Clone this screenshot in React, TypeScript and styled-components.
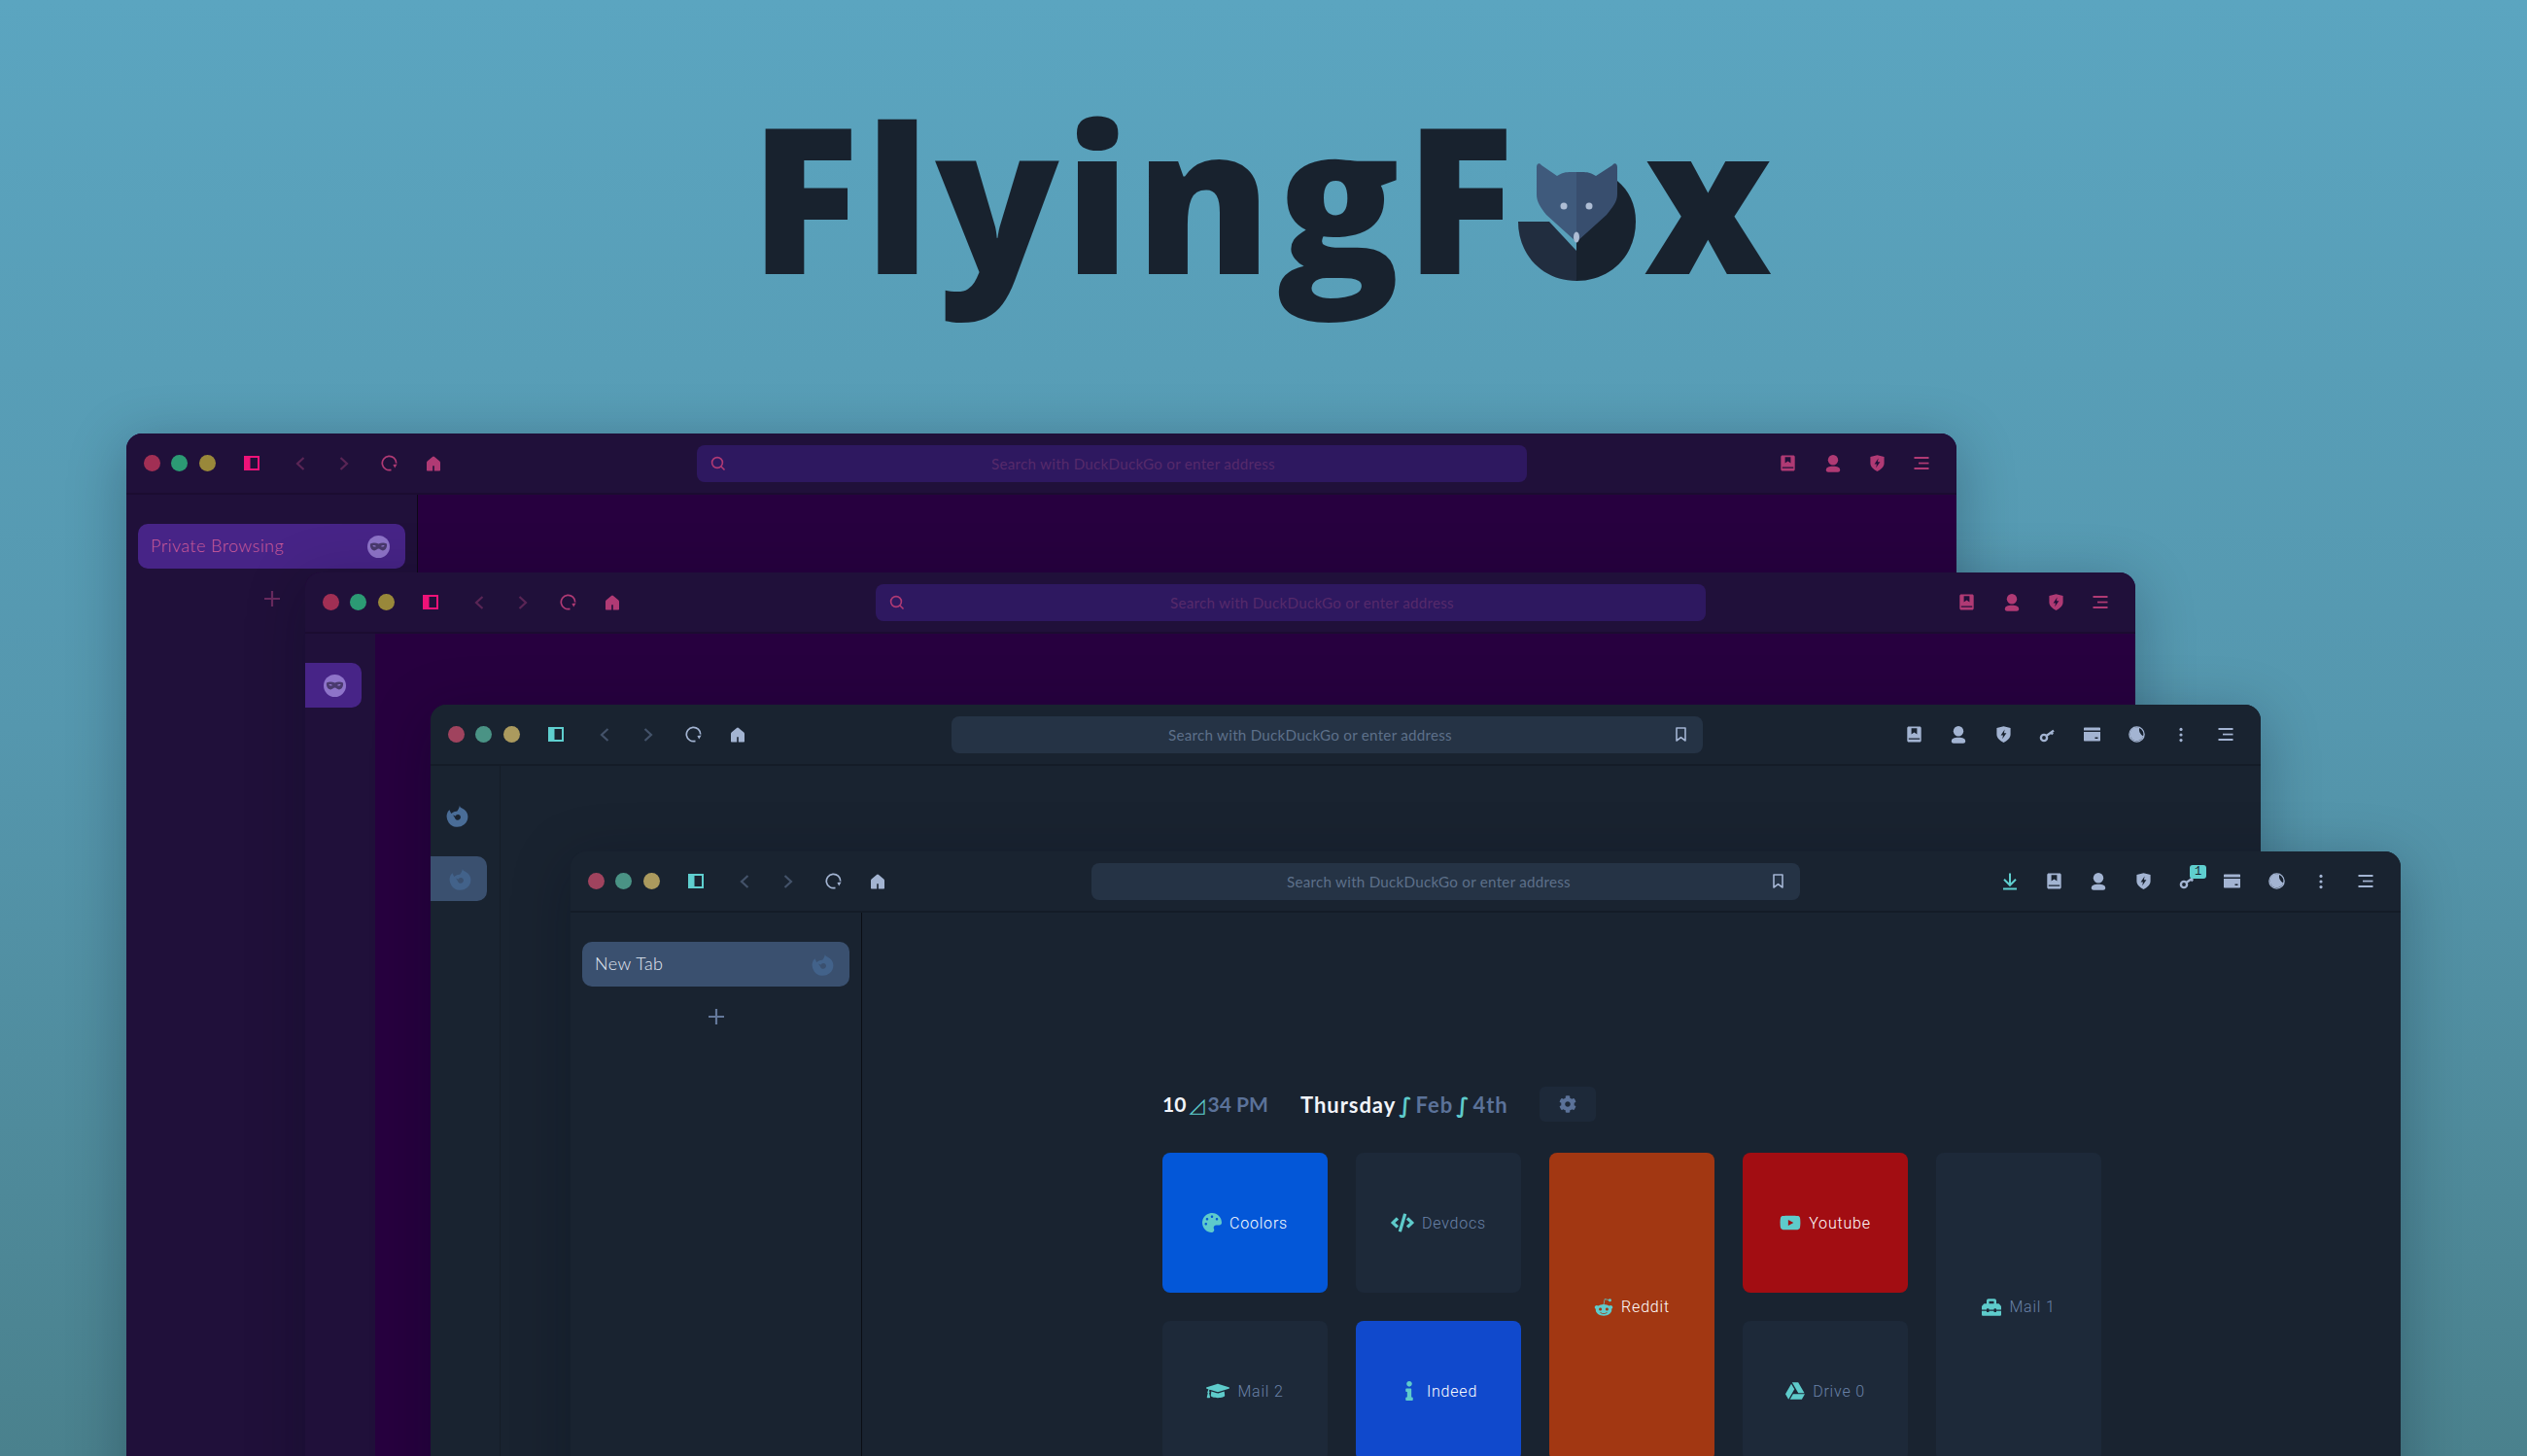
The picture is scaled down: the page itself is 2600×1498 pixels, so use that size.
import React, { useContext } from "react";
import styled, { createGlobalStyle, ThemeContext, ThemeProvider } from "styled-components";
import { FaPalette, FaCode, FaRedditAlien, FaYoutube, FaGoogleDrive, FaToolbox, FaGraduationCap, FaInfo, FaCog } from "react-icons/fa";

const purple = {
  bar: "#20103a", line: "#1b0c31", content: "#27003f", url: "#2e1860", urlText: "#562a6b",
  icon: "#b03a74", off: "#5a2555", toggle: "#ee1278", dots: ["#a12f54", "#2c9a74", "#99883a"],
  tab: "#472487", tabText: "#cc5c9a", plus: "#6a2a5f", side: "#0d0818",
};
const slate = {
  bar: "#192330", line: "#141c27", content: "#192330", url: "#253345", urlText: "#5d708a",
  icon: "#a3b4d2", off: "#435269", toggle: "#5fcfcf", dots: ["#a0435e", "#4a9385", "#ab9a5e"],
  tab: "#3a506f", tabText: "#e2e9f3", plus: "#64789a", side: "#141c27",
};

const Global = createGlobalStyle`
  html, body { margin: 0; padding: 0; }
  body { font-family: "Lato", "Liberation Sans", sans-serif; background: #4f8a9c; }
`;

const Stage = styled.div`
  position: relative;
  width: 2600px;
  height: 1498px;
  overflow: hidden;
  background: linear-gradient(180deg, #5ba5c0 0%, #5597ae 50%, #4a818d 100%);
`;

const Logo = styled.h1`
  display: flex;
  justify-content: center;
  align-items: baseline;
  margin: 0;
  padding-top: 97px;
  font-family: "Open Sans", "Noto Sans", sans-serif;
  font-weight: 800;
  font-size: 209px;
  line-height: 1;
  letter-spacing: 5.3px;
  color: #18222e;
`;

const FoxMark = styled.svg`
  width: 121px;
  height: 121px;
  flex: none;
  margin: 0 9px 0 -2px;
  transform: translateY(7px);
`;

const Win = styled.section<{ $x: number; $y: number; $w: number }>`
  position: absolute;
  left: ${p => p.$x}px;
  top: ${p => p.$y}px;
  width: ${p => p.$w}px;
  height: 1300px;
  display: flex;
  flex-direction: column;
  overflow: hidden;
  border-radius: 16px 16px 0 0;
  background: ${p => p.theme.content};
  box-shadow: 0 12px 60px rgba(8, 10, 24, 0.28);
`;

const Toolbar = styled.header`
  flex: none;
  height: 63px;
  box-sizing: border-box;
  display: flex;
  align-items: center;
  padding: 0 13px 0 17.5px;
  background: ${p => p.theme.bar};
  border-bottom: 2px solid ${p => p.theme.line};
`;

const Dots = styled.div`
  display: flex;
  gap: 11.5px;
  margin-right: 15px;
`;

const Dot = styled.span<{ $c: string }>`
  width: 17px;
  height: 17px;
  border-radius: 50%;
  background: ${p => p.$c};
`;

const Slot = styled.span`
  position: relative;
  flex: none;
  width: 45.8px;
  display: flex;
  align-items: center;
  justify-content: center;
  color: ${p => p.theme.icon};
`;

const ToggleSlot = styled(Slot)`
  margin-right: 3.5px;
  color: ${p => p.theme.toggle};
`;

const OffSlot = styled(Slot)`
  color: ${p => p.theme.off};
`;

const ActiveSlot = styled(Slot)`
  color: #5fcfcf;
`;

const UrlBar = styled.div<{ $ml: number; $w: number }>`
  flex: none;
  margin-left: ${p => p.$ml}px;
  width: ${p => p.$w}px;
  height: 38px;
  display: flex;
  align-items: center;
  border-radius: 8px;
  background: ${p => p.theme.url};
`;

const UrlSearch = styled.span`
  flex: none;
  width: 44px;
  display: flex;
  justify-content: center;
  color: ${p => p.theme.icon};
`;

const UrlText = styled.span`
  flex: 1;
  text-align: center;
  font-size: 15.2px;
  letter-spacing: 0.25px;
  color: ${p => p.theme.urlText};
`;

const UrlMark = styled.span`
  flex: none;
  box-sizing: border-box;
  width: 35px;
  padding-right: 16px;
  display: flex;
  justify-content: flex-end;
  color: ${p => p.theme.icon};
`;

const RightTools = styled.div`
  margin-left: auto;
  display: flex;
`;

const Badge = styled.span`
  position: absolute;
  left: 25px;
  top: -7px;
  width: 17px;
  height: 14px;
  border-radius: 3px;
  background: #5fcfcf;
  color: #18222e;
  font: 12px/14px "Liberation Mono", monospace;
  text-align: center;
`;

const Body = styled.div`
  flex: 1;
  display: flex;
  min-height: 0;
`;

const Side = styled.aside<{ $w: number; $line?: string; $top: number }>`
  flex: none;
  box-sizing: border-box;
  width: ${p => p.$w}px;
  padding-top: ${p => p.$top}px;
  display: flex;
  flex-direction: column;
  background: ${p => p.theme.bar};
  border-right: 1.5px solid ${p => p.$line || p.theme.side};
`;

const TabLabel = styled.span`
  padding-bottom: 2px;
`;

const Tab = styled.div`
  height: 46px;
  margin: 0 12px;
  padding: 0 16px 0 13px;
  display: flex;
  align-items: center;
  justify-content: space-between;
  border-radius: 10px;
  background: ${p => p.theme.tab};
  color: ${p => p.theme.tabText};
  font-size: 18px;
  font-weight: 300;
  letter-spacing: 0.45px;
`;

const PinnedTab = styled.div`
  width: 58px;
  height: 46px;
  padding-left: 2px;
  box-sizing: border-box;
  display: flex;
  align-items: center;
  justify-content: center;
  border-radius: 0 10px 10px 0;
  background: ${p => p.theme.tab};
`;

const PinnedIcon = styled.div`
  height: 23px;
  margin: 0 0 30px 16px;
  display: flex;
`;

const Plus = styled.div`
  align-self: center;
  margin-top: 22px;
  color: ${p => p.theme.plus};
  display: flex;
`;

const Page = styled.main`
  flex: 1;
  padding: 179px 0 0 309px;
  display: flex;
  flex-direction: column;
`;

const ClockRow = styled.div`
  display: flex;
  align-items: center;
  height: 36px;
  font-size: 22px;
  font-weight: 700;
  color: #5b7299;
`;

const Strong = styled.span`
  color: #f1f4fa;
`;

const Glyph = styled.span`
  color: #5ecbcb;
  font-family: "DejaVu Sans", sans-serif;
  font-weight: 700;
  margin: 0 3px;
`;

const ClockPart = styled.span`
  flex: none;
  width: 142px;
  white-space: pre;
  font-size: 21px;
`;

const DatePart = styled.span`
  flex: none;
  width: 246px;
  white-space: pre;
  letter-spacing: 0.95px;
`;

const Gear = styled.button`
  width: 58px;
  height: 36px;
  border: 0;
  border-radius: 6px;
  background: #1d2939;
  color: #5b7299;
  display: flex;
  align-items: center;
  justify-content: center;
  padding: 0;
`;

const Tiles = styled.div`
  margin-top: 32px;
  display: grid;
  grid-template-columns: repeat(5, 170px);
  grid-template-rows: repeat(2, 144px);
  gap: 29px;
`;

const Tile = styled.a<{ $bg?: string; $tall?: boolean }>`
  grid-row: ${p => (p.$tall ? "span 2" : "auto")};
  display: flex;
  align-items: center;
  justify-content: center;
  gap: 8px;
  border-radius: 8px;
  background: ${p => p.$bg || "#1d2939"};
  color: ${p => (p.$bg ? "#ffffff" : "#6a82a8")};
  font-family: "Roboto", sans-serif;
  font-size: 16px;
  font-weight: 300;
  letter-spacing: 0.8px;
  svg { color: #5ecbcb; flex: none; }
`;

const Svg = ({ s = 16, w, children }: any) => (
  <svg width={w || s} height={s} viewBox={`0 0 ${w || s} ${s}`} fill="currentColor">{children}</svg>
);

const Toggle = () => (
  <svg width="16" height="15" viewBox="0 0 16 15">
    <rect x="1" y="1" width="14" height="13" fill="none" stroke="currentColor" strokeWidth="2" />
    <rect x="1" y="1" width="5.5" height="13" fill="currentColor" />
  </svg>
);
const Chevron = ({ right }: { right?: boolean }) => (
  <svg width="10" height="16" viewBox="0 0 10 16" fill="none" stroke="currentColor" strokeWidth="2.2">
    <path d={right ? "M1.5 2 L8 8 L1.5 14" : "M8.5 2 L2 8 L8.5 14"} />
  </svg>
);
const Reload = () => (
  <svg width="17" height="17" viewBox="0 0 17 17">
    <path d="M10.5 15.4 A7.2 7.2 0 1 1 15.7 8.5" fill="none" stroke="currentColor" strokeWidth="1.7" />
    <path d="M12.4 10 L16.6 9.6 L14.2 13.6 Z" fill="currentColor" />
  </svg>
);
const Home = () => (
  <Svg s={16}>
    <path fillRule="evenodd" d="M8 .6 C8.4 .6 8.8 .9 9 1 L14.4 5.6 C14.8 6 15 6.4 15 7 V14.5 C15 15.2 14.6 15.6 14 15.6 H2 C1.4 15.6 1 15.2 1 14.5 V7 C1 6.4 1.2 6 1.6 5.6 L7 1 C7.2 .9 7.6 .6 8 .6 Z M7.2 10.2 V15.6 H8.8 V10.2 Z" />
  </Svg>
);
const Library = () => (
  <Svg s={17} w={15}>
    <path fillRule="evenodd" d="M2 .5 H13 C14 .5 14.7 1.2 14.7 2 V15 C14.7 15.9 14 16.5 13 16.5 H2 C1 16.5 .3 15.9 .3 15 V2 C.3 1.2 1 .5 2 .5 Z M4.6 2.2 V8.6 L7.5 6.6 L10.4 8.6 V2.2 Z M1.8 12.4 V13.8 H13.2 V12.4 Z" />
  </Svg>
);
const Person = () => (
  <Svg s={18} w={16}>
    <circle cx="8" cy="5.2" r="5.2" />
    <path d="M.8 15.6 C.8 13 3.4 11.8 8 11.8 C12.6 11.8 15.2 13 15.2 15.6 C15.2 17 14.2 17.8 13 17.8 H3 C1.8 17.8 .8 17 .8 15.6 Z" />
  </Svg>
);
const Shield = () => (
  <Svg s={17} w={15}>
    <path fillRule="evenodd" d="M7.5 .2 L14.6 2 V8.5 C14.6 12.4 11 15.4 7.5 16.9 C4 15.4 .4 12.4 .4 8.5 V2 Z M8.6 3.6 L4.6 9.4 H7 L6.2 13.2 L10.4 7.2 H7.9 Z" />
  </Svg>
);
const Menu = () => (
  <Svg s={15} w={16}>
    <rect x="0.5" y="1" width="15" height="2" />
    <rect x="5" y="6.7" width="10.5" height="1.7" />
    <rect x="0.5" y="12" width="15" height="2" />
  </Svg>
);
const Key = () => (
  <svg width="20" height="20" viewBox="0 0 20 20" fill="none" stroke="currentColor">
    <circle cx="6" cy="13" r="3.1" strokeWidth="2.4" />
    <path d="M8.6 11 L16 5.6 M13.4 7.4 L15 9.4" strokeWidth="2.4" />
  </svg>
);
const Card = () => (
  <Svg s={15} w={17}>
    <path fillRule="evenodd" d="M1 .5 H16 C16.6 .5 17 .9 17 1.5 V3.6 H0 V1.5 C0 .9 .4 .5 1 .5 Z M0 5 H17 V13.5 C17 14.1 16.6 14.5 16 14.5 H1 C.4 14.5 0 14.1 0 13.5 Z M11.5 10.5 V12 H14.5 V10.5 Z" />
  </Svg>
);
const Moon = () => (
  <svg width="17" height="17" viewBox="0 0 17 17">
    <circle cx="8.5" cy="8.5" r="7.6" fill="none" stroke="currentColor" strokeWidth="1.4" />
    <path d="M11.2 1.8 A7 7 0 1 0 15.2 10.4 A7.4 7.4 0 0 1 11.2 1.8 Z" fill="currentColor" />
  </svg>
);
const VDots = () => (
  <Svg s={16} w={6}>
    <circle cx="3" cy="2.4" r="1.6" />
    <circle cx="3" cy="8" r="1.6" />
    <circle cx="3" cy="13.6" r="1.6" />
  </Svg>
);
const Download = () => (
  <svg width="16" height="18" viewBox="0 0 16 18" fill="none" stroke="currentColor" strokeWidth="2">
    <path d="M8 .5 V12.5 M2 6.8 L8 12.8 L14 6.8 M1 16.6 H15" />
  </svg>
);
const BookmarkLine = () => (
  <svg width="13" height="15" viewBox="0 0 13 15" fill="none" stroke="currentColor" strokeWidth="1.6">
    <path d="M2 1 H11 V14 L6.5 10.6 L2 14 Z" strokeLinejoin="round" />
  </svg>
);
const Search = () => (
  <svg width="16" height="16" viewBox="0 0 16 16" fill="none" stroke="currentColor" strokeWidth="1.6">
    <circle cx="7" cy="7" r="5.4" />
    <path d="M11 11 L14.5 14.5" />
  </svg>
);
const PlusIcon = () => (
  <svg width="18" height="18" viewBox="0 0 18 18" fill="none" stroke="currentColor" strokeWidth="2.2">
    <path d="M9 1 V17 M1 9 H17" />
  </svg>
);
const Mask = () => (
  <svg width="23" height="23" viewBox="0 0 23 23">
    <circle cx="11.5" cy="11.5" r="11.5" fill="#8e74c9" />
    <path fillRule="evenodd" fill="#4a3a6e" d="M3 8.5 C6 7 9 7.6 11.5 8.6 C14 7.6 17 7 20 8.5 C20.6 12 18.6 15.4 15.8 15.4 C14 15.4 13 13.6 11.5 13.6 C10 13.6 9 15.4 7.2 15.4 C4.4 15.4 2.4 12 3 8.5 Z M5.4 10.4 C6.2 11.8 8 11.8 9 11 C8 10 6.4 9.8 5.4 10.4 Z M17.6 10.4 C16.8 11.8 15 11.8 14 11 C15 10 16.6 9.8 17.6 10.4 Z" />
  </svg>
);
const Firefox = ({ c }: { c: string }) => (
  <svg width="23" height="23" viewBox="0 0 24 24">
    <path fillRule="evenodd" fill={c} d="M14.6 .4 C14.6 2.2 15.5 3 17 3.6 C20.8 5.2 23.4 8.8 23.4 13 A11.4 11.4 0 1 1 .8 10.4 C1.2 8.4 2.2 6.6 3.6 5.4 L5.4 9.4 L8.4 7.6 C9.4 7 10.4 6.8 11.6 7 C13 5.6 14.2 3 14.6 .4 Z M7.4 11 L10 12.2 C10.4 11.2 11.4 10.4 12.6 10.4 C14.4 10.4 15.6 11.8 15.6 13.4 C15.6 15.2 14.2 16.4 12.6 16.4 C11 16.4 9.8 15.4 9.4 14 Z" />
  </svg>
);

function Chrome({ urlLeft, urlWidth, search, mark, tools }: any) {
  const theme = useContext(ThemeContext) as typeof purple;
  return (
    <Toolbar>
      <Dots>{theme.dots.map(c => <Dot key={c} $c={c} />)}</Dots>
      <ToggleSlot><Toggle /></ToggleSlot>
      <OffSlot><Chevron /></OffSlot>
      <OffSlot><Chevron right /></OffSlot>
      <Slot><Reload /></Slot>
      <Slot><Home /></Slot>
      <UrlBar $ml={urlLeft} $w={urlWidth}>
        {search && <UrlSearch><Search /></UrlSearch>}
        <UrlText>Search with DuckDuckGo or enter address</UrlText>
        {mark && <UrlMark><BookmarkLine /></UrlMark>}
      </UrlBar>
      <RightTools>{tools}</RightTools>
    </Toolbar>
  );
}

const shortTools = (
  <>
    <Slot><Library /></Slot>
    <Slot><Person /></Slot>
    <Slot><Shield /></Slot>
    <Slot><Menu /></Slot>
  </>
);

const fullTools = (badge: boolean) => (
  <>
    <Slot><Library /></Slot>
    <Slot><Person /></Slot>
    <Slot><Shield /></Slot>
    <Slot><Key />{badge && <Badge>1</Badge>}</Slot>
    <Slot><Card /></Slot>
    <Slot><Moon /></Slot>
    <Slot><VDots /></Slot>
    <Slot><Menu /></Slot>
  </>
);

const Fox = () => (
  <FoxMark viewBox="0 0 121 121" role="img" aria-label="o">
    <path d="M0 60 H32 L60 90 V121 C26 121 0 95 0 60 Z" fill="#212d3f" />
    <path d="M60 121 C94 121 121 96 121 60 C121 42 114 28 102 18 L60 40 Z" fill="#18222e" />
    <path d="M60 81 L29 53 C23 45 19 40 19 32 V4 C19 0 22 -1 24 2 L40 13 C47 8 53 9 60 9 Z" fill="#3f5a7c" />
    <path d="M60 81 L91 53 C97 45 102 40 102 32 V4 C102 0 99 -1 97 2 L80 13 C73 8 67 9 60 9 Z" fill="#384e6e" />
    <circle cx="47" cy="44" r="3.5" fill="#aebdd4" />
    <circle cx="73" cy="44" r="3.5" fill="#aebdd4" />
    <ellipse cx="60" cy="76" rx="3" ry="5.6" fill="#aebdd4" />
  </FoxMark>
);

export default function App() {
  return (
    <Stage>
      <Global />
      <Logo>FlyingF<Fox />x</Logo>

      <ThemeProvider theme={purple}>
        <Win $x={130} $y={446} $w={1883}>
          <Chrome urlLeft={248} urlWidth={854} search tools={shortTools} />
          <Body>
            <Side $w={300} $top={30}>
              <Tab><TabLabel>Private Browsing</TabLabel><Mask /></Tab>
              <Plus><PlusIcon /></Plus>
            </Side>
          </Body>
        </Win>
        <Win $x={314} $y={589} $w={1883}>
          <Chrome urlLeft={248} urlWidth={854} search tools={shortTools} />
          <Body>
            <Side $w={72} $top={30} $line={purple.bar}>
              <PinnedTab><Mask /></PinnedTab>
            </Side>
          </Body>
        </Win>
      </ThemeProvider>

      <ThemeProvider theme={slate}>
        <Win $x={443} $y={725} $w={1883}>
          <Chrome urlLeft={197} urlWidth={773} mark tools={fullTools(false)} />
          <Body>
            <Side $w={72} $top={40}>
              <PinnedIcon><Firefox c="#4a6d97" /></PinnedIcon>
              <PinnedTab><Firefox c="#42628a" /></PinnedTab>
            </Side>
          </Body>
        </Win>
        <Win $x={587} $y={876} $w={1883}>
          <Chrome urlLeft={197} urlWidth={729} mark tools={<><ActiveSlot><Download /></ActiveSlot>{fullTools(true)}</>} />
          <Body>
            <Side $w={300} $top={30} $line="#0a0e14">
              <Tab><TabLabel>New Tab</TabLabel><Firefox c="#42628a" /></Tab>
              <Plus><PlusIcon /></Plus>
            </Side>
            <Page>
              <ClockRow>
                <ClockPart><Strong>10</Strong><Glyph>◿</Glyph>34 PM</ClockPart>
                <DatePart><Strong>Thursday</Strong><Glyph>∫</Glyph>Feb<Glyph>∫</Glyph>4th</DatePart>
                <Gear aria-label="settings"><FaCog size={18} /></Gear>
              </ClockRow>
              <Tiles>
                <Tile $bg="#0357d8"><FaPalette size={20} />Coolors</Tile>
                <Tile><FaCode size={24} />Devdocs</Tile>
                <Tile $bg="#a23712" $tall><FaRedditAlien size={20} />Reddit</Tile>
                <Tile $bg="#a20d12"><FaYoutube size={22} />Youtube</Tile>
                <Tile $tall><FaToolbox size={20} />Mail 1</Tile>
                <Tile><FaGraduationCap size={24} />Mail 2</Tile>
                <Tile $bg="#1049cc"><FaInfo size={20} />Indeed</Tile>
                <Tile><FaGoogleDrive size={20} />Drive 0</Tile>
              </Tiles>
            </Page>
          </Body>
        </Win>
      </ThemeProvider>
    </Stage>
  );
}
